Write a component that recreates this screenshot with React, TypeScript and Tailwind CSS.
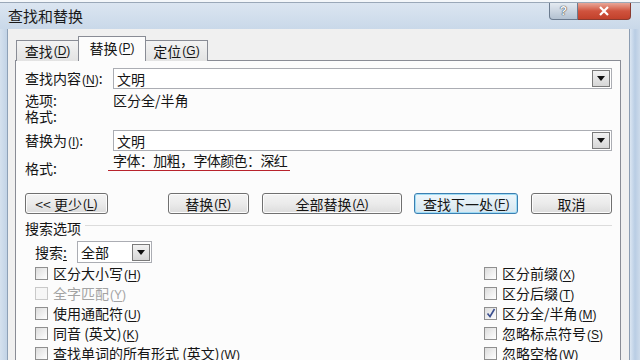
import React from "react";

const Mn: React.FC<{ k: string }> = ({ k }) => (
  <span className="text-[12px] font-['Liberation_Sans',sans-serif] ml-[1px]">
    (<span className="underline underline-offset-2">{k}</span>)
  </span>
);

const Arrow: React.FC = () => (
  <div className="w-[18px] h-[17px] border border-[#7a7a7a] bg-gradient-to-b from-[#f2f2f2] to-[#d6d6d6] flex items-center justify-center">
    <svg width="8" height="5" viewBox="0 0 8 5">
      <path d="M0 0h8L4 5z" fill="#111" />
    </svg>
  </div>
);

const Combo: React.FC<{ value: string }> = ({ value }) => (
  <div className="flex-1 h-[21px] border border-[#abadb3] bg-white flex items-center justify-between pl-[3px] pr-[1px]">
    <span className="text-[14px] leading-none">{value}</span>
    <Arrow />
  </div>
);

const Btn: React.FC<{ children: React.ReactNode; w: string; primary?: boolean }> = ({
  children,
  w,
  primary,
}) => (
  <div
    className={`${w} h-[21px] rounded-[3px] border flex items-center justify-center text-[14px] leading-none ${
      primary
        ? "border-[#3c7fb1] bg-gradient-to-b from-[#eef7fc] to-[#d6e6ef] shadow-[inset_0_0_0_1px_#9fdcf5]"
        : "border-[#707070] bg-gradient-to-b from-[#f4f4f4] via-[#ebebeb] to-[#dcdcdc] shadow-[inset_0_0_0_1px_#fcfcfc]"
    }`}
  >
    {children}
  </div>
);

const Check: React.FC<{ label: React.ReactNode; checked?: boolean; disabled?: boolean }> = ({
  label,
  checked,
  disabled,
}) => (
  <div className={`h-[20px] flex items-center gap-[5px] text-[14px] ${disabled ? "text-[#a3a3a3]" : ""}`}>
    <div
      className={`w-[13px] h-[13px] border flex items-center justify-center ${
        disabled
          ? "border-[#c9c9c9] bg-[#f6f6f6]"
          : "border-[#8f8f8f] bg-gradient-to-br from-[#dcdcdc] to-[#ffffff]"
      }`}
    >
      {checked && (
        <svg width="10" height="10" viewBox="0 0 10 10">
          <path d="M1.5 5.5 L4 8.5 L8.5 1" stroke="#3b4f8f" strokeWidth="1.6" fill="none" />
        </svg>
      )}
    </div>
    <span className="leading-none">{label}</span>
  </div>
);

export default function App() {
  const left = [
    { t: "区分大小写", k: "H" },
    { t: "全字匹配", k: "Y", disabled: true },
    { t: "使用通配符", k: "U" },
    { t: "同音 (英文)", k: "K" },
    { t: "查找单词的所有形式 (英文)", k: "W" },
  ];
  const right = [
    { t: "区分前缀", k: "X" },
    { t: "区分后缀", k: "T" },
    { t: "区分全/半角", k: "M", checked: true },
    { t: "忽略标点符号", k: "S" },
    { t: "忽略空格", k: "W" },
  ];

  return (
    <div className="w-[640px] h-[360px] overflow-hidden flex flex-col bg-[#c8d7e8] text-[#151515] font-['Noto_Sans_CJK_SC','Noto_Sans',sans-serif]">
      {/* title bar */}
      <div className="h-[29px] shrink-0 flex items-start justify-between border-t-[2px] border-t-[#f4f7fa] bg-gradient-to-b from-[#dce6f1] to-[#c9d8e9]">
        <div className="h-full border-t border-[#9aa8b8] flex-1 flex">
          <span className="ml-[8px] mt-[3px] text-[15px] leading-[20px] text-[#1a1a1a]">查找和替换</span>
        </div>
        <div className="flex border-t border-[#9aa8b8] pr-[9px]">
          <div className="w-[29px] h-[17px] rounded-bl-[4px] border border-t-0 border-[#6b7b8f] bg-gradient-to-b from-[#e4eaf1] to-[#b3c1d1] flex items-center justify-center text-[12px] font-bold text-[#f4f6f9] leading-none font-['Liberation_Sans',sans-serif] [text-shadow:0_0_1px_#333,0_0_1px_#333]">
            ?
          </div>
          <div className="w-[53px] h-[17px] rounded-br-[4px] border border-l-0 border-t-0 border-[#8b3b30] bg-gradient-to-b from-[#e8a698] via-[#d0533e] to-[#c2412b] flex items-center justify-center">
            <svg width="12" height="10" viewBox="0 0 12 10">
              <path d="M2 1 L10 9 M10 1 L2 9" stroke="#fff" strokeWidth="2.2" />
            </svg>
          </div>
        </div>
      </div>

      <div className="flex-1 flex min-h-0">
        {/* left frame */}
        <div className="w-[8px] shrink-0 bg-gradient-to-r from-[#d5e1ee] to-[#c2d3e6] border-r border-[#8ea1b7]" />

        {/* client */}
        <div className="w-[622px] shrink-0 bg-[#f0f0f0] pl-[7px] pr-[8px] pt-[7px] border-r border-[#8c9db2]">
          {/* tabs */}
          <div className="flex items-end h-[25px] pl-[1px] relative z-10">
            <div className="w-[63px] h-[21px] border border-b-0 border-[#898c95] bg-gradient-to-b from-[#f3f3f3] to-[#e3e3e3] flex items-center justify-center text-[14px] leading-none">
              查找<Mn k="D" />
            </div>
            <div className="w-[68px] h-[25px] -mx-[1px] border border-b-0 border-[#898c95] bg-[#fcfcfc] flex items-center justify-center text-[14px] leading-none pb-[2px]">
              替换<Mn k="P" />
            </div>
            <div className="w-[63px] h-[21px] border border-b-0 border-[#898c95] bg-gradient-to-b from-[#f3f3f3] to-[#e3e3e3] flex items-center justify-center text-[14px] leading-none">
              定位<Mn k="G" />
            </div>
          </div>

          {/* panel */}
          <div className="-mt-[1px] h-[320px] border border-[#898c95] bg-[#fcfcfc] pl-[9px] pr-[8px] pt-[7px] text-[14px]">
            <div className="flex items-center h-[21px]">
              <div className="w-[88px] leading-none">
                查找内容<Mn k="N" />:
              </div>
              <Combo value="文明" />
            </div>
            <div className="flex h-[16px] mt-[3px] items-center leading-[16px]">
              <div className="w-[88px]">选项:</div>
              <div>区分全/半角</div>
            </div>
            <div className="flex h-[16px] items-center leading-[16px]">
              <div className="w-[88px]">格式:</div>
            </div>

            <div className="flex items-center h-[21px] mt-[6px]">
              <div className="w-[88px] leading-none">
                替换为<Mn k="I" />:
              </div>
              <Combo value="文明" />
            </div>
            <div className="flex items-start h-[25px]">
              <div className="w-[88px] mt-[9px] leading-[16px]">格式:</div>
              <div className="-ml-[5px] pl-[5px] w-[182px] h-[19px] mt-[1px] border-b-[1.5px] border-[#b8232c] leading-[16px] tracking-[-0.6px]">
                字体：加粗，字体颜色：深红
              </div>
            </div>

            {/* buttons */}
            <div className="flex items-center mt-[17px]">
              <Btn w="w-[83px]">
                &lt;&lt; 更少<Mn k="L" />
              </Btn>
              <div className="w-[60px]" />
              <Btn w="w-[81px]">
                替换<Mn k="R" />
              </Btn>
              <div className="w-[13px]" />
              <Btn w="w-[141px]">
                全部替换<Mn k="A" />
              </Btn>
              <div className="w-[12px]" />
              <Btn w="w-[104px]" primary>
                查找下一处<Mn k="F" />
              </Btn>
              <div className="w-[13px]" />
              <Btn w="w-[81px]">取消</Btn>
            </div>

            {/* search options */}
            <div className="flex items-center h-[16px] mt-[6px] leading-none">
              <span>搜索选项</span>
              <div className="flex-1 h-px bg-[#dcdcdc] ml-[4px] -mt-[5px]" />
            </div>
            <div className="flex items-center pl-[10px] mt-[5px] h-[22px]">
              <span className="w-[42px] leading-none">
                搜索<span className="underline underline-offset-2">:</span>
              </span>
              <div className="w-[75px] h-[22px] border border-[#abadb3] bg-white flex items-center justify-between pl-[3px] pr-[1px]">
                <span className="leading-none">全部</span>
                <Arrow />
              </div>
            </div>

            <div className="grid grid-cols-[449px_1fr] pl-[10px]">
              <div className="flex flex-col">
                {left.map((c, i) => (
                  <Check
                    key={i}
                    disabled={c.disabled}
                    label={
                      <>
                        {c.t}
                        <Mn k={c.k} />
                      </>
                    }
                  />
                ))}
              </div>
              <div className="flex flex-col">
                {right.map((c, i) => (
                  <Check
                    key={i}
                    checked={c.checked}
                    label={
                      <>
                        {c.t}
                        <Mn k={c.k} />
                      </>
                    }
                  />
                ))}
              </div>
            </div>
          </div>
        </div>

        {/* right frame */}
        <div className="flex-1 bg-gradient-to-r from-[#dbe6f2] via-[#b9cde4] to-[#cddbeb]" />
      </div>
    </div>
  );
}
